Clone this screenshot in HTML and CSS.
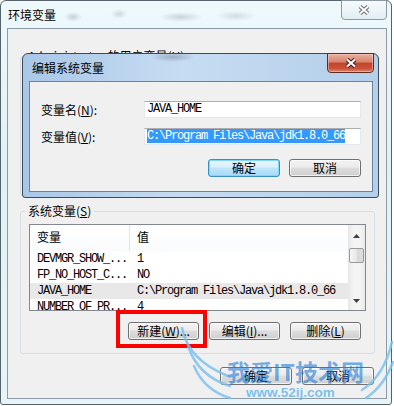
FILE: index.html
```html
<!DOCTYPE html>
<html lang="zh-CN">
<head>
  <meta charset="UTF-8">
  <meta name="viewport" content="width=device-width, initial-scale=1.0">
  <title>环境变量</title>
  <link rel="stylesheet" href="styles.css">
</head>
<body>
  <div class="desktop">

    <!-- 环境变量 窗口 -->
    <div class="window env">
      <div class="titlebar">
        <span class="title">环境变量</span>
        <button class="close">
          <svg width="12" height="10" viewBox="0 0 12 10"><path d="M2 1.5L10 8.5M10 1.5L2 8.5" stroke="#707070" stroke-width="4"/><path d="M2 1.5L10 8.5M10 1.5L2 8.5" stroke="#fff" stroke-width="1.8"/></svg>
        </button>
      </div>
      <div class="client">
        <fieldset class="group user">
          <legend>Administrator 的用户变量(<u>U</u>)</legend>
        </fieldset>

        <fieldset class="group system">
          <legend>系统变量(<u>S</u>)</legend>
          <div class="listview">
            <div class="list-main">
              <div class="list-head"><span class="col-name">变量</span><span class="col-value">值</span></div>
              <div class="list-row"><span class="col-name">DEVMGR_SHOW_...</span><span class="col-value">1</span></div>
              <div class="list-row"><span class="col-name">FP_NO_HOST_C...</span><span class="col-value">NO</span></div>
              <div class="list-row selected"><span class="col-name">JAVA_HOME</span><span class="col-value">C:\Program Files\Java\jdk1.8.0_66</span></div>
              <div class="list-row"><span class="col-name">NUMBER_OF_PR...</span><span class="col-value">4</span></div>
            </div>
            <div class="scrollbar">
              <div class="sb-btn up"><svg width="7" height="4" viewBox="0 0 7 4"><polygon points="0,4 3.5,0 7,4" fill="#404040"/></svg></div>
              <div class="sb-track"><div class="sb-thumb"></div></div>
              <div class="sb-btn down"><svg width="7" height="4" viewBox="0 0 7 4"><polygon points="0,0 7,0 3.5,4" fill="#404040"/></svg></div>
            </div>
          </div>
          <div class="btn-row">
            <button class="btn">新建(<u>W</u>)...</button>
            <button class="btn">编辑(<u>I</u>)...</button>
            <button class="btn">删除(<u>L</u>)</button>
          </div>
        </fieldset>

        <div class="btn-row actions">
          <button class="btn">确定</button>
          <button class="btn">取消</button>
        </div>
      </div>
    </div>

    <!-- 编辑系统变量 对话框 -->
    <div class="window dialog">
      <div class="titlebar">
        <span class="title">编辑系统变量</span>
        <button class="close">
          <svg width="12" height="10" viewBox="0 0 12 10"><path d="M2 1.5L10 8.5M10 1.5L2 8.5" stroke="#4a1d16" stroke-width="4.2"/><path d="M2 1.5L10 8.5M10 1.5L2 8.5" stroke="#fff" stroke-width="2.2"/></svg>
        </button>
      </div>
      <div class="client">
        <label>变量名(<u>N</u>):</label>
        <div class="field">JAVA_HOME</div>
        <label>变量值(<u>V</u>):</label>
        <div class="field"><span class="sel">C:\Program Files\Java\jdk1.8.0_66</span></div>
        <div class="dialog-buttons">
          <button class="btn default">确定</button>
          <button class="btn">取消</button>
        </div>
      </div>
    </div>

    <!-- 标注 -->
    <div class="mark"></div>

    <!-- 水印 -->
    <div class="watermark">
      <svg width="224" height="86" viewBox="0 0 224 86">
        <g fill="none" stroke="#78c0f0" stroke-width="2.5" stroke-linecap="round" opacity="0.8">
          <path d="M12 8Q18 40 58 56"/>
          <path d="M18 26Q28 56 60 66"/>
          <path d="M24 46Q34 70 60 78"/>
          <path d="M222 22Q214 56 192 70"/>
          <path d="M223 42Q214 66 196 78"/>
        </g>
      </svg>
      <div class="wm-title">我爱IT技术网</div>
      <div class="wm-url">www.52ij.com</div>
    </div>

  </div>
</body>
</html>
```

FILE: styles.css
```css
* {
  box-sizing: border-box;
}
body {
  margin: 0;
  background: #fff;
  font: 12px/14px "Noto Sans CJK SC", sans-serif;
  color: #000;
}
.desktop {
  position: relative;
  width: 394px;
  height: 406px;
  overflow: hidden;
}

/* 窗口框架 */
.window {
  display: flex;
  flex-direction: column;
  border: 1px solid #56626c;
  border-radius: 6px 6px 3px 3px;
}
.env {
  width: 392px;
  height: 405px;
  background: linear-gradient(#eef9fc, #dff1f7 40%, #e7f5f9);
}
.titlebar {
  display: flex;
  align-items: center;
  height: 27px;
  flex: none;
}
.env .titlebar {
  padding-left: 7px;
  background-image:
    radial-gradient(ellipse 9px 5px at 72px 16px, rgba(110, 120, 130, 0.3), transparent),
    radial-gradient(ellipse 8px 5px at 118px 13px, rgba(110, 120, 130, 0.25), transparent),
    radial-gradient(ellipse 22px 5px at 180px 16px, rgba(110, 120, 130, 0.28), transparent),
    radial-gradient(ellipse 20px 5px at 235px 15px, rgba(110, 120, 130, 0.22), transparent);
}
.title {
  line-height: 14px;
  white-space: nowrap;
}
.close {
  margin-left: auto;
  margin-right: 4px;
  align-self: flex-start;
  margin-top: -1px;
  width: 46px;
  height: 20px;
  padding: 0;
  display: flex;
  align-items: center;
  justify-content: center;
  border: 1px solid #8b99a4;
  border-radius: 0 0 4px 4px;
  background: linear-gradient(#f6fbfd, #e2eef3);
}
.client {
  flex: 1;
  margin: 0 4px 5px 6px;
  border: 1px solid #8e9aa5;
  background: #f0f0f0;
}
.env .client {
  padding: 20px 11px 0 12px;
}

/* 分组框 */
.group {
  margin: 0;
  padding: 6px 8px 13px;
  border: 1px solid #d5dfe5;
  border-radius: 3px;
  min-width: 0;
}
.group legend {
  padding: 0 3px;
  margin-left: -4px;
  line-height: 14px;
}
.user {
  height: 147px;
}
.system {
  margin-top: 8px;
}

/* 列表 */
.listview {
  display: flex;
  height: 87px;
  border: 1px solid #828790;
  background: #fff;
}
.list-main {
  flex: 1;
  overflow: hidden;
}
.list-head {
  display: flex;
  height: 26px;
  background: linear-gradient(#fff, #fafbfc);
}
.list-head span {
  line-height: 24px;
}
.col-name {
  width: 100px;
  flex: none;
  padding-left: 7px;
  white-space: nowrap;
  overflow: hidden;
}
.list-head .col-name {
  border-right: 1px solid #e2e3e5;
}
.col-value {
  padding-left: 7px;
  white-space: nowrap;
}
.list-row,
.field {
  font-family: "Liberation Mono", monospace;
  font-size: 12px;
  letter-spacing: -1.2px;
}
.list-row {
  display: flex;
  height: 16px;
  line-height: 16px;
}
.list-row.selected {
  background: #e8e8e8;
}
.scrollbar {
  width: 17px;
  flex: none;
  display: flex;
  flex-direction: column;
  background: linear-gradient(to right, #e6e6e6, #f4f4f4 30%, #f4f4f4 70%, #e9e9e9);
}
.sb-btn {
  height: 22px;
  display: flex;
  align-items: center;
  justify-content: center;
}
.sb-btn.down {
  height: 18px;
}
.sb-track {
  flex: 1;
  padding-top: 1px;
}
.sb-thumb {
  height: 15px;
  margin: 0 1px;
  border: 1px solid #999;
  border-radius: 2px;
  background: linear-gradient(to right, #f6f6f6, #e8e8e8 50%, #d8d8d8 50%, #dedede);
}

/* 按钮 */
.btn-row {
  display: flex;
  justify-content: flex-end;
  gap: 10px;
}
.system .btn-row {
  margin: 11px 5px 0 0;
}
.actions {
  margin: 13px 1px 0 0;
}
.btn {
  width: 71px;
  height: 18px;
  padding: 0;
  border: 1px solid #707070;
  border-radius: 3px;
  background: linear-gradient(#f3f3f3, #ebebeb 45%, #dddddd 50%, #cfcfcf);
  box-shadow: inset 0 0 0 1px rgba(255, 255, 255, 0.7);
  font: 12px/16px "Noto Sans CJK SC", sans-serif;
  color: #000;
  white-space: nowrap;
}
.actions .btn {
  width: 72px;
}
.btn.default {
  border-color: #3c8fc6;
  background: linear-gradient(#eaf6fd, #d9f0fc 45%, #bee6fd 50%, #a7d9f5);
  box-shadow: inset 0 0 0 1px #7fd8f8;
}

/* 编辑对话框 */
.dialog {
  position: absolute;
  left: 22px;
  top: 53px;
  width: 357px;
  height: 145px;
  border-color: #3b4b5c;
  background: linear-gradient(to right, #a9c7e7, #c6dcf2 45%, #b3cfea);
}
.dialog .titlebar {
  padding-left: 9px;
  background-image: radial-gradient(ellipse 22px 5px at 150px 3px, rgba(60, 70, 90, 0.3), transparent);
}
.dialog .close {
  width: 47px;
  border-color: #5f2a22;
  background: linear-gradient(#eab0a2, #d7836d 45%, #c4432c 50%, #c9513a 80%, #d98a6f);
  box-shadow: inset 0 0 0 1px rgba(255, 210, 200, 0.5);
}
.dialog .client {
  margin: 0 5px 5px 6px;
  border-color: #6a829c;
  display: grid;
  grid-template-columns: 103px 217px;
  align-items: center;
  align-content: start;
  row-gap: 10px;
  padding: 19px 11px 0;
}
.dialog label {
  white-space: nowrap;
}
.field {
  height: 17px;
  padding: 0 2px;
  border: 1px solid #e3e9ef;
  border-top-color: #abadb3;
  background: #fff;
  line-height: 15px;
  white-space: nowrap;
  overflow: hidden;
}
.field .sel {
  background: #3399ff;
  color: #fff;
}
.dialog-buttons {
  grid-column: 1 / -1;
  display: flex;
  justify-content: flex-end;
  gap: 9px;
  margin-top: 4px;
}
.dialog-buttons .btn {
  width: 72px;
}

/* 红框标注 */
.mark {
  position: absolute;
  left: 116px;
  top: 310px;
  width: 91px;
  height: 38px;
  border: 4px solid #ff0000;
}

/* 水印 */
.watermark {
  position: absolute;
  left: 170px;
  top: 320px;
  width: 224px;
  height: 86px;
  padding: 39px 0 0 57px;
  pointer-events: none;
}
.watermark svg {
  position: absolute;
  left: 0;
  top: 0;
}
.wm-title {
  position: relative;
  font: bold 23px/24px "Noto Sans CJK SC", sans-serif;
  color: rgba(35, 125, 215, 0.62);
  white-space: nowrap;
}
.wm-url {
  position: relative;
  margin: 3px 0 0 19px;
  font: bold 13.5px/13px "Liberation Sans", sans-serif;
  color: rgba(90, 180, 235, 0.8);
}
```
